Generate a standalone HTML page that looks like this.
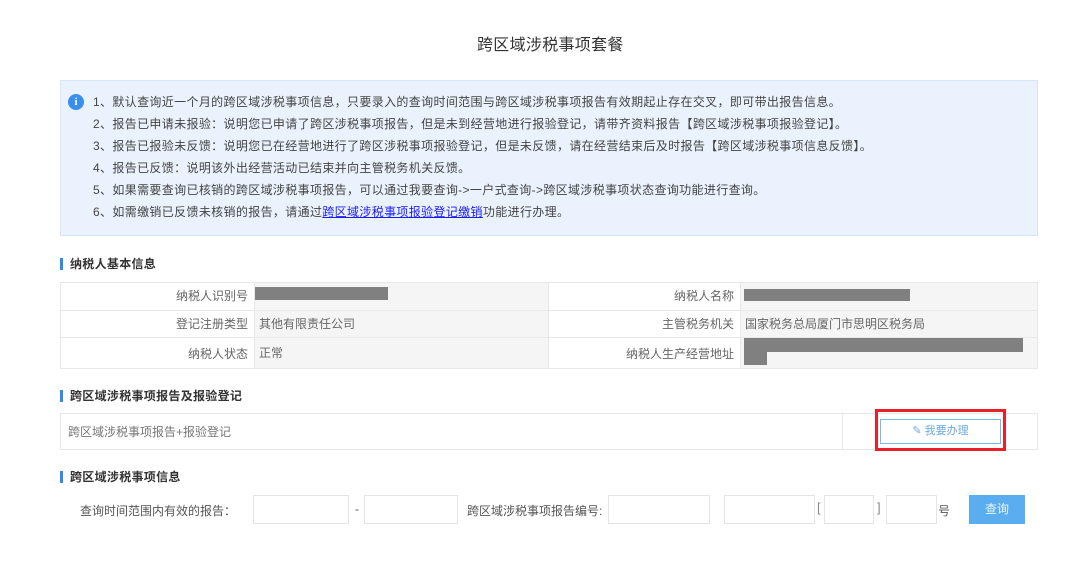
<!DOCTYPE html>
<html><head><meta charset="utf-8"><style>
*{margin:0;padding:0;box-sizing:border-box}
body{width:1080px;height:566px;background:#fff;position:relative;font-family:"Liberation Sans","Noto Sans CJK SC",sans-serif;font-size:12px;color:#555;overflow:hidden}
.a{position:absolute;white-space:nowrap}
.info{position:absolute;left:60px;top:80px;width:978px;height:156px;background:#eaf3fd;border:1px solid #d6e6f6}
.info .l{position:absolute;left:32px;color:#444;font-size:12px;line-height:14px;letter-spacing:0.35px;white-space:nowrap}
.h{position:absolute;left:60px;font-weight:bold;color:#333;font-size:12px;padding-left:7px;border-left:3px solid #2f8ae8;line-height:12px;letter-spacing:0.3px}
.cell{position:absolute;border:1px solid #e8e8e8}
.g{background:#f5f5f5}
.lab{text-align:right;padding-right:6px;color:#666;line-height:26px}
.val{padding-left:4px;color:#666;line-height:26px}
.red{position:absolute;background:#808080}
.inp{position:absolute;top:495px;height:29px;border:1px solid #e4e4e4;background:#fff}
</style></head><body>
<div class="a" style="left:477px;top:31px;font-size:16px;color:#333;letter-spacing:0.3px">跨区域涉税事项套餐</div>

<div class="info">
<div style="position:absolute;left:7px;top:13px;width:16px;height:16px;border-radius:50%;background:#3a8ef0;color:#fff;font-size:11px;font-weight:bold;text-align:center;line-height:16px;font-family:'Liberation Serif',serif">i</div>
<div class="l" style="top:14px">1、默认查询近一个月的跨区域涉税事项信息，只要录入的查询时间范围与跨区域涉税事项报告有效期起止存在交叉，即可带出报告信息。</div>
<div class="l" style="top:36px">2、报告已申请未报验：说明您已申请了跨区涉税事项报告，但是未到经营地进行报验登记，请带齐资料报告【跨区域涉税事项报验登记】。</div>
<div class="l" style="top:58px">3、报告已报验未反馈：说明您已在经营地进行了跨区涉税事项报验登记，但是未反馈，请在经营结束后及时报告【跨区域涉税事项信息反馈】。</div>
<div class="l" style="top:80px">4、报告已反馈：说明该外出经营活动已结束并向主管税务机关反馈。</div>
<div class="l" style="top:102px">5、如果需要查询已核销的跨区域涉税事项报告，可以通过我要查询-&gt;一户式查询-&gt;跨区域涉税事项状态查询功能进行查询。</div>
<div class="l" style="top:124px">6、如需缴销已反馈未核销的报告，请通过<span style="color:#1a1aff;text-decoration:underline">跨区域涉税事项报验登记缴销</span>功能进行办理。</div>
</div>

<div class="h" style="top:258px">纳税人基本信息</div>
<div class="cell lab" style="left:60px;top:282px;width:195px;height:29px">纳税人识别号</div>
<div class="cell g" style="left:254px;top:282px;width:295px;height:29px"></div>
<div class="cell lab" style="left:548px;top:282px;width:193px;height:29px">纳税人名称</div>
<div class="cell g" style="left:740px;top:282px;width:298px;height:29px"></div>
<div class="cell lab" style="left:60px;top:310px;width:195px;height:28px">登记注册类型</div>
<div class="cell g val" style="left:254px;top:310px;width:295px;height:28px">其他有限责任公司</div>
<div class="cell lab" style="left:548px;top:310px;width:193px;height:28px">主管税务机关</div>
<div class="cell g val" style="left:740px;top:310px;width:298px;height:28px">国家税务总局厦门市思明区税务局</div>
<div class="cell lab" style="left:60px;top:337px;width:195px;height:32px;line-height:32px">纳税人状态</div>
<div class="cell g val" style="left:254px;top:337px;width:295px;height:32px;line-height:30px">正常</div>
<div class="cell lab" style="left:548px;top:337px;width:193px;height:32px;line-height:32px">纳税人生产经营地址</div>
<div class="cell g" style="left:740px;top:337px;width:298px;height:32px"></div>
<div class="red" style="left:255px;top:287px;width:133px;height:13px"></div>
<div class="red" style="left:744px;top:289px;width:166px;height:12px"></div>
<div class="red" style="left:744px;top:338px;width:279px;height:14px"></div>
<div class="red" style="left:744px;top:351px;width:23px;height:14px"></div>

<div class="h" style="top:390px">跨区域涉税事项报告及报验登记</div>
<div class="cell" style="left:60px;top:413px;width:783px;height:37px;line-height:36px;padding-left:7px;color:#777">跨区域涉税事项报告+报验登记</div>
<div class="cell" style="left:842px;top:413px;width:196px;height:37px"></div>
<div class="a" style="left:880px;top:419px;width:121px;height:25px;border:1px solid #7bb8ec;text-align:center;line-height:23px;color:#6aaae6;font-size:11px">&#9998; 我要办理</div>
<div class="a" style="left:875px;top:409px;width:131px;height:42px;border:3px solid #e8202a"></div>

<div class="h" style="top:471px">跨区域涉税事项信息</div>
<div class="a" style="left:80px;top:502px;color:#555">查询时间范围内有效的报告：</div>
<div class="inp" style="left:253px;width:96px"></div>
<div class="a" style="left:355px;top:502px">-</div>
<div class="inp" style="left:364px;width:94px"></div>
<div class="a" style="left:467px;top:502px;color:#555">跨区域涉税事项报告编号:</div>
<div class="inp" style="left:608px;width:102px"></div>
<div class="inp" style="left:724px;width:91px"></div>
<div class="a" style="left:817px;top:500px;color:#888;font-size:13px">[</div>
<div class="inp" style="left:824px;width:50px"></div>
<div class="a" style="left:877px;top:500px;color:#888;font-size:13px">]</div>
<div class="inp" style="left:886px;width:51px"></div>
<div class="a" style="left:938px;top:502px">号</div>
<div class="a" style="left:969px;top:495px;width:56px;height:29px;background:#5aaef0;color:#eaf4ff;text-align:center;line-height:29px">查询</div>
</body></html>
